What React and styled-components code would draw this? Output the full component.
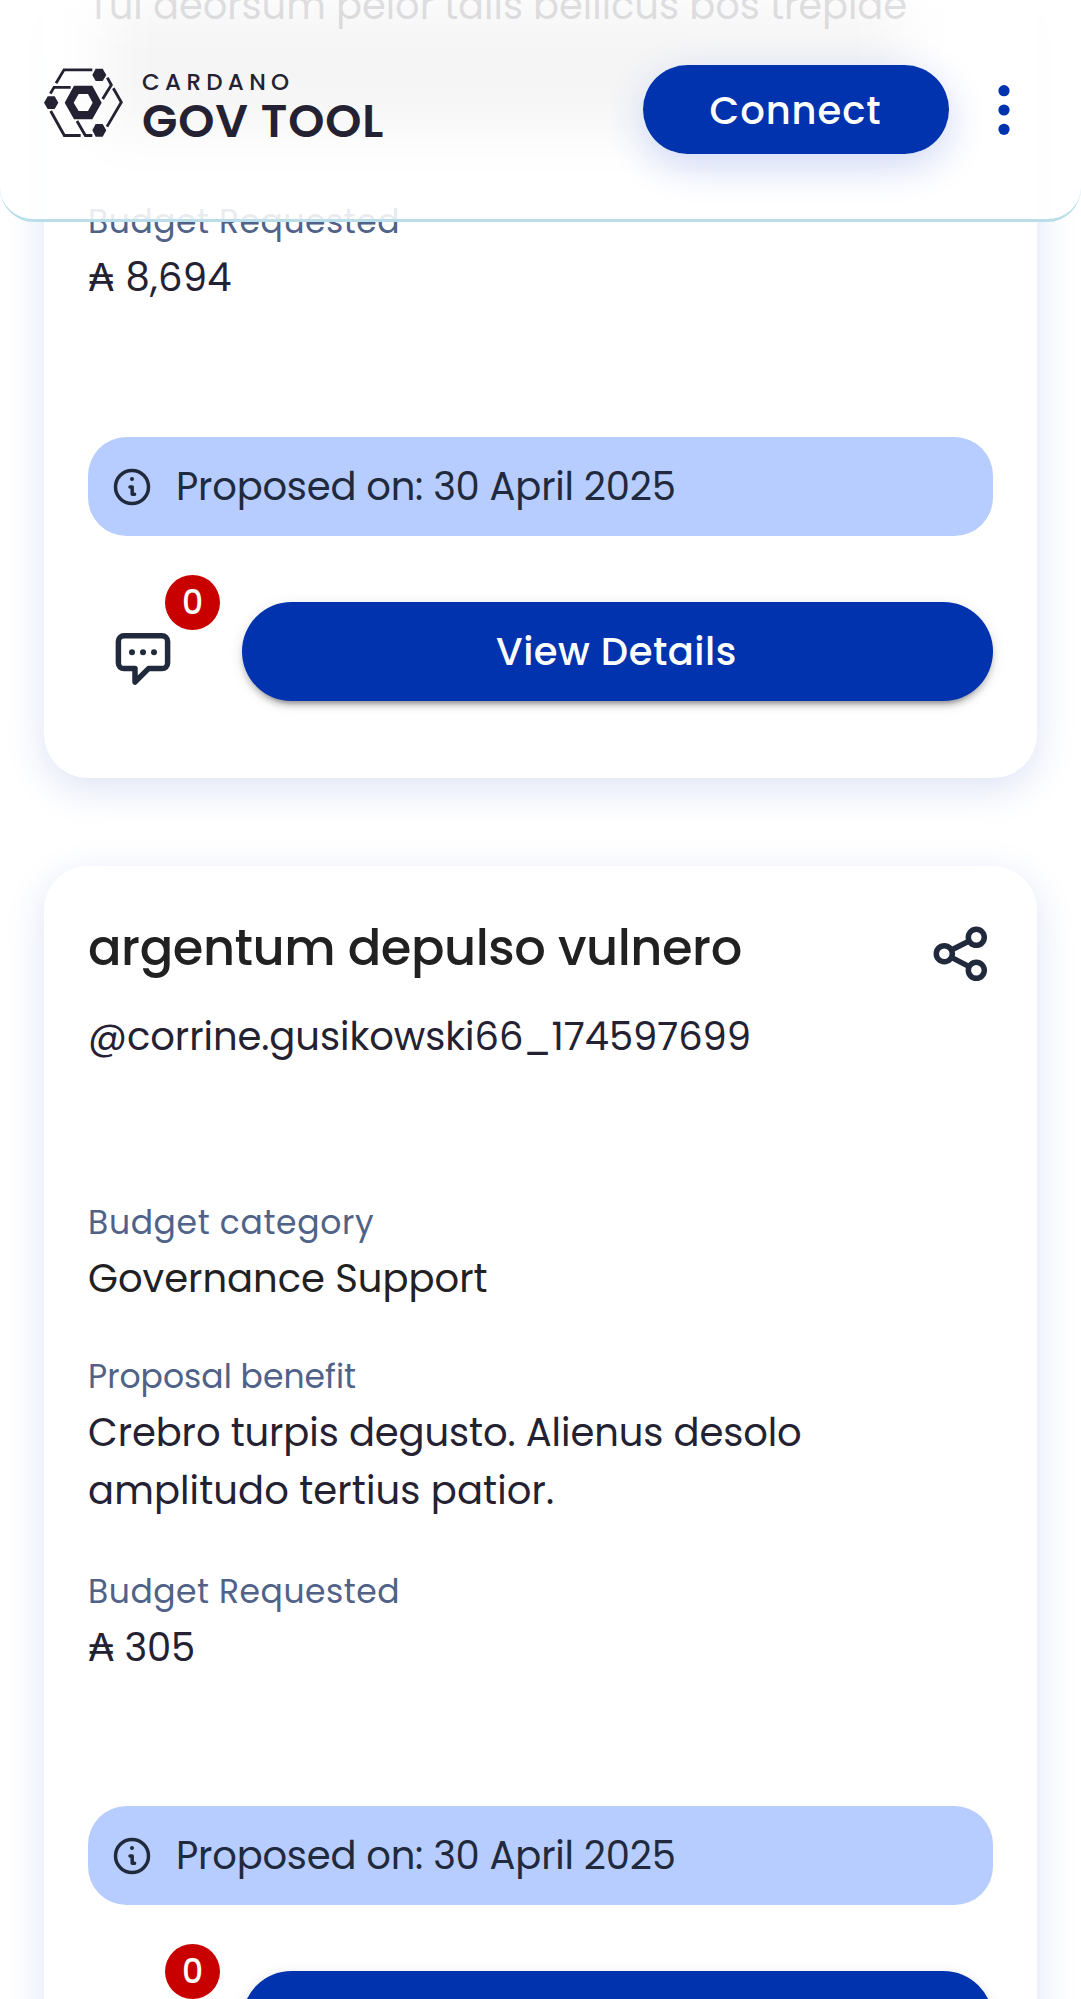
import React from "react";
import styled, { createGlobalStyle } from "styled-components";

const GlobalStyle = createGlobalStyle`
  * { box-sizing: border-box; }
  body {
    margin: 0;
    background: #fff;
    font-family: Poppins, Inter, "Open Sans", sans-serif;
    font-feature-settings: "cv11" 1;
  }
`;

const Page = styled.div`
  position: relative;
  width: 1081px;
  height: 1999px;
  overflow: hidden;
`;

const Header = styled.header`
  position: absolute;
  inset: 0 0 auto 0;
  z-index: 2;
  height: 222px;
  padding: 65px 67px 0 44px;
  display: flex;
  align-items: flex-start;
  justify-content: space-between;
  background: rgba(255, 255, 255, 0.87);
  border-bottom: 3px solid #b9deea;
  border-radius: 0 0 34px 34px;
  overflow: hidden;

  &::before {
    content: "";
    position: absolute;
    z-index: -1;
    left: 105px;
    right: 180px;
    top: 6px;
    height: 124px;
    background: rgba(0, 0, 0, 0.04);
    filter: blur(27px);
  }
`;

const Brand = styled.div`
  display: flex;
  gap: 19px;
  padding-top: 3px;
`;

const BrandMark = styled.svg`
  width: 79px;
  height: 69.3px;
`;

const BrandText = styled.div`
  color: #242232;
  padding-top: 1px;
`;

const BrandTop = styled.div`
  font-size: 23px;
  line-height: 26px;
  font-weight: 500;
  letter-spacing: 5.3px;
`;

const BrandMain = styled.div`
  font-size: 46px;
  line-height: 44px;
  font-weight: 600;
  margin-top: 4px;
  letter-spacing: 0.9px;
  white-space: nowrap;
`;

const HeaderActions = styled.div`
  display: flex;
  align-items: center;
  gap: 45px;
`;

const ConnectButton = styled.button`
  width: 306px;
  height: 89px;
  padding: 1px 1px 0 0;
  border: 0;
  border-radius: 45px;
  background: #0033ad;
  color: #fff;
  font: inherit;
  font-size: 38.5px;
  font-weight: 500;
  letter-spacing: 0.9px;
  box-shadow: 0 11px 41px #cdd6f5;
`;

const MenuDots = styled.svg`
  width: 20px;
  height: 60px;
  fill: #0033ad;
`;

const Feed = styled.main`
  display: flex;
  flex-direction: column;
  gap: 88px;
  padding: 0 43.7px 0 44px;
`;

const Card = styled.article`
  display: flex;
  flex-direction: column;
  flex: none;
  padding: ${(p) => (p.$continued ? "0 44px 77px" : "45px 44px 77px")};
  background: #fff;
  border-radius: ${(p) => (p.$continued ? "0 0 44px 44px" : "44px")};
  box-shadow: 0 11px 41px #dde3f5;
`;

const CardHead = styled.div`
  display: flex;
  justify-content: space-between;
  align-items: flex-start;
  height: 74px;
  margin-bottom: 23px;
`;

const Title = styled.h2`
  margin: 0;
  color: #212121;
  font-size: 49.5px;
  line-height: 74px;
  font-weight: 500;
  letter-spacing: ${(p) => p.$track};
  white-space: nowrap;
`;

const ShareIcon = styled.svg`
  width: 66px;
  height: 66px;
  margin: 10.5px 0.5px 0 0;
  fill: none;
  stroke: #212a3d;
  stroke-width: 5.5;
`;

const Line = styled.div`
  height: 58px;
  color: ${(p) => p.$color || "#242232"};
  font-size: 38.5px;
  line-height: 58px;
  letter-spacing: ${(p) => p.$track || "0"};
  white-space: nowrap;
`;

const Handle = styled(Line)`
  margin-bottom: 132px;
`;

const Field = styled.section`
  margin-bottom: ${(p) => p.$after}px;
`;

const Label = styled.div`
  height: 50px;
  margin-bottom: 2px;
  color: #506288;
  font-size: 33px;
  line-height: 50px;
  letter-spacing: ${(p) => p.$track};
  white-space: nowrap;
`;

const ClippedBenefit = styled.section`
  height: 172.7px;
  margin: -23px 0 47.2px;
`;

const DatePill = styled.div`
  display: flex;
  align-items: center;
  gap: 22px;
  height: 99px;
  padding: 2px 0 0 22px;
  margin-bottom: 66px;
  border-radius: 38.5px;
  background: #b8cdff;
`;

const InfoIcon = styled.svg`
  width: 44px;
  height: 44px;
  fill: none;
  stroke: #212a3d;
  stroke-width: 3.5;
  stroke-linecap: round;
  stroke-linejoin: round;
`;

const Actions = styled.div`
  display: flex;
  justify-content: space-between;
  height: 99px;
`;

const CommentButton = styled.div`
  position: relative;
  width: 110px;
  height: 99px;
  padding: 24px 0 0 22px;
`;

const CommentIcon = styled.svg`
  display: block;
  width: 66px;
  height: 66px;
  fill: none;
  stroke: #212a3d;
  stroke-width: 5.5;
  stroke-linejoin: round;
`;

const Badge = styled.span`
  position: absolute;
  top: -27px;
  left: 77px;
  width: 55px;
  height: 55px;
  border-radius: 50%;
  background: #c90000;
  color: #fff;
  font-size: 33px;
  font-weight: 500;
  line-height: 55px;
  text-align: center;
`;

const DetailsButton = styled.button`
  width: 751px;
  height: 99px;
  padding: 0 3px 0 0;
  border: 0;
  border-radius: 50px;
  background: #0033ad;
  color: #fff;
  font: inherit;
  font-size: 38.5px;
  font-weight: 500;
  letter-spacing: ${(p) => p.$track};
  box-shadow:
    0 8px 3px -5.5px rgba(0, 0, 0, 0.2),
    0 5.5px 5.5px rgba(0, 0, 0, 0.14),
    0 3px 14px rgba(0, 0, 0, 0.12);
`;

function Logo() {
  return (
    <Brand>
      <BrandMark viewBox="132 204 237 208" fill="none" stroke="#242232" strokeWidth="8.5">
        <path d="M168 250 192 209.500H277M151 281l11-19H212M322 233l12 22-26 42M340 265l24 42-43 73M152 333l41 73.500H242M231 363l25 43.500H277" />
        <g fill="#242232" stroke="none">
          <path d="M277 225l10-19h21l11 19-11 18h-21zM277 391l10-19h21l11 19-11 19h-21zM132 308l11-19h21l11 19-11 19h-21z" />
          <path fillRule="evenodd" d="M194 308l28-51h55l28 51-28 50h-55zM221 308l15 25h28l14-25-14-26h-28z" />
        </g>
      </BrandMark>
      <BrandText>
        <BrandTop>CARDANO</BrandTop>
        <BrandMain>GOV TOOL</BrandMain>
      </BrandText>
    </Brand>
  );
}

function CardFooter() {
  return (
    <>
      <DatePill>
        <InfoIcon viewBox="0 0 44 44">
          <circle cx="22" cy="22" r="16.5" />
          <path d="M20 22h2.2v7.3h2.4" />
          <circle cx="22" cy="14" r="2" fill="#212a3d" stroke="none" />
        </InfoIcon>
        <Line $color="#212a3d" $track="-0.22px">Proposed on: 30 April 2025</Line>
      </DatePill>
      <Actions>
        <CommentButton>
          <CommentIcon viewBox="0 0 66 66">
            <path d="M14 9.8H52a5.6 5.6 0 0 1 5.6 5.6V37a5.6 5.6 0 0 1-5.6 5.6H38.5L25 56V42.6H14A5.6 5.6 0 0 1 8.4 37V15.4A5.6 5.6 0 0 1 14 9.8z" />
            <g fill="#212a3d" stroke="none">
              <circle cx="22" cy="26.3" r="3" />
              <circle cx="33" cy="26.3" r="3" />
              <circle cx="44" cy="26.3" r="3" />
            </g>
          </CommentIcon>
          <Badge>0</Badge>
        </CommentButton>
        <DetailsButton $track="0.5px">View Details</DetailsButton>
      </Actions>
    </>
  );
}

export default function App() {
  return (
    <Page>
      <GlobalStyle />
      <Header>
        <Logo />
        <HeaderActions>
          <ConnectButton>Connect</ConnectButton>
          <MenuDots viewBox="0 0 20 60">
            <circle cx="10" cy="10.7" r="5.6" />
            <circle cx="10" cy="30" r="5.6" />
            <circle cx="10" cy="49.3" r="5.6" />
          </MenuDots>
        </HeaderActions>
      </Header>
      <Feed>
        <Card $continued>
          <ClippedBenefit>
            <Line $track="-0.07px">Tui deorsum pelor talis bellicus bos trepide</Line>
          </ClippedBenefit>
          <Field $after={129.8}>
            <Label $track="0.53px">Budget Requested</Label>
            <Line $track="0.3px">₳ 8,694</Line>
          </Field>
          <CardFooter />
        </Card>
        <Card>
          <CardHead>
            <Title $track="-0.44px">argentum depulso vulnero</Title>
            <ShareIcon viewBox="0 0 66 66">
              <circle cx="17.3" cy="32.7" r="8" />
              <circle cx="49.3" cy="16.3" r="8" />
              <circle cx="49.3" cy="49.3" r="8" />
              <path d="M24.4 29 42.2 20M24.4 36.4 42.2 45.6" />
            </ShareIcon>
          </CardHead>
          <Handle $track="-0.05px">@corrine.gusikowski66_174597699</Handle>
          <Field $after={44}>
            <Label $track="0.65px">Budget category</Label>
            <Line $color="#212121" $track="0px">Governance Support</Line>
          </Field>
          <Field $after={47.7}>
            <Label $track="0.02px">Proposal benefit</Label>
            <Line $track="-0.09px">Crebro turpis degusto. Alienus desolo</Line>
            <Line $track="0.1px">amplitudo tertius patior.</Line>
          </Field>
          <Field $after={128.6}>
            <Label $track="0.53px">Budget Requested</Label>
            <Line $track="-0.2px">₳ 305</Line>
          </Field>
          <CardFooter />
        </Card>
      </Feed>
    </Page>
  );
}
